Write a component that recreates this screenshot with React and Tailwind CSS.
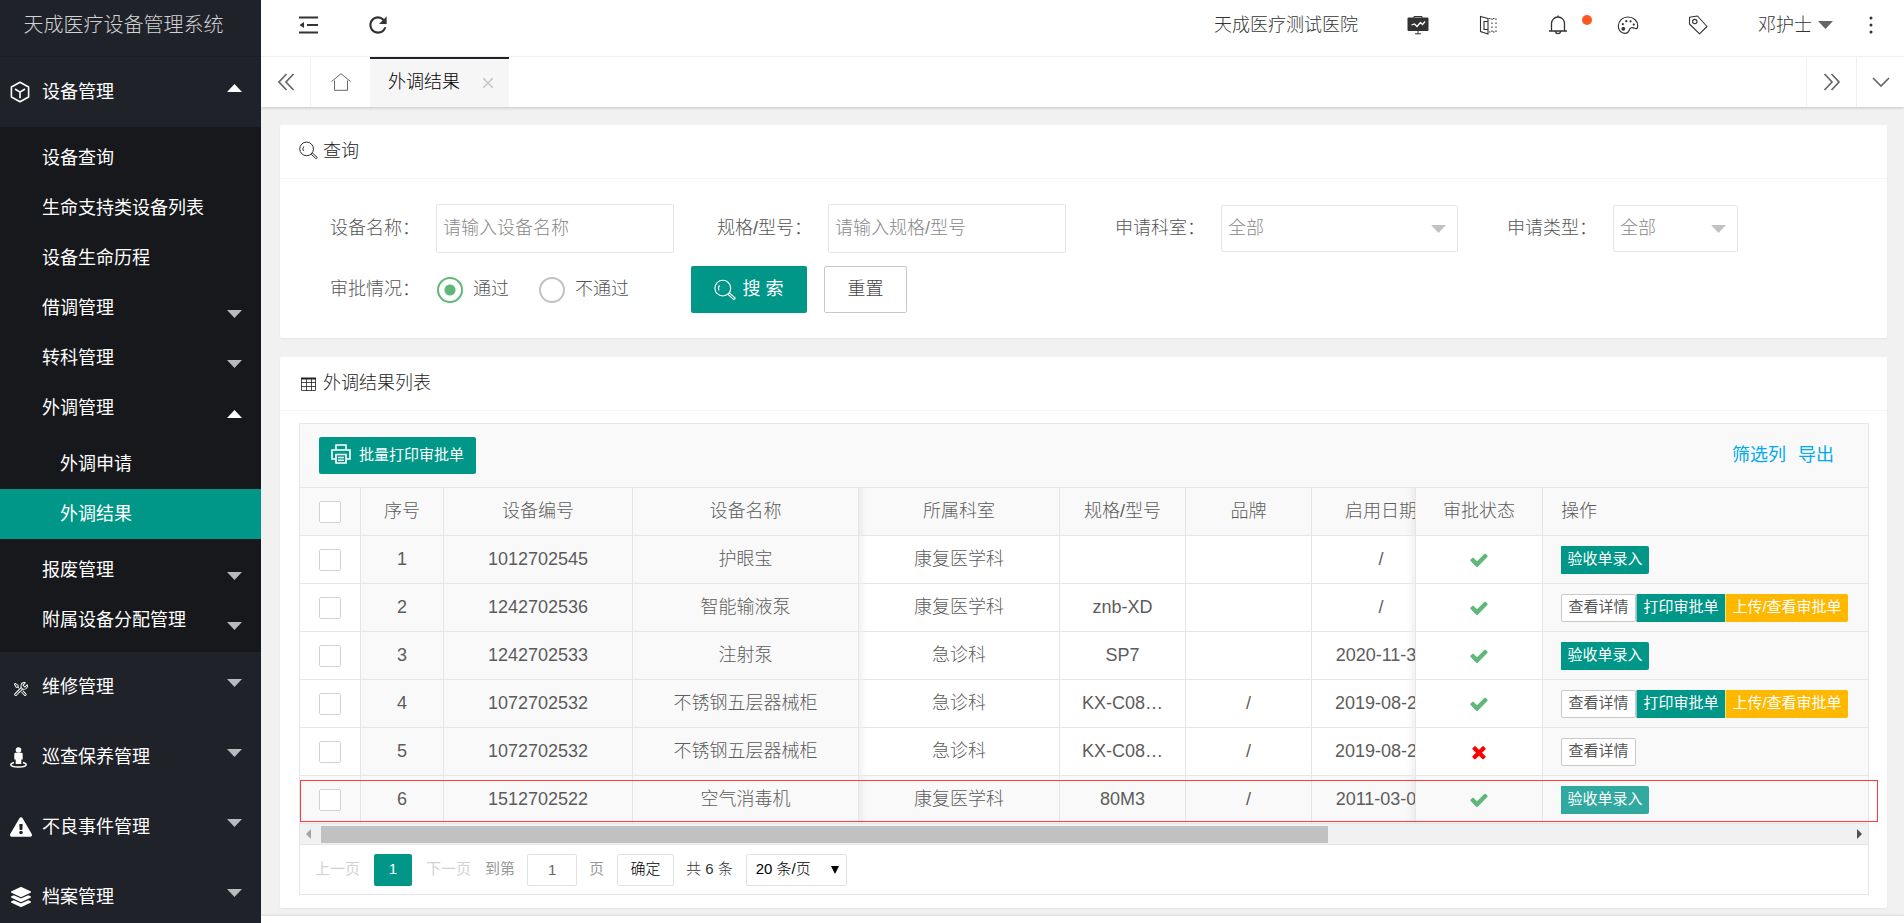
import { clsx } from "clsx";
import { FaExclamationTriangle, FaLayerGroup } from "react-icons/fa";
import { MdRefresh } from "react-icons/md";
import { VscTools } from "react-icons/vsc";

const deviceMenu = [
  { label: "设备查询" },
  { label: "生命支持类设备列表" },
  { label: "设备生命历程" },
  { label: "借调管理", caret: "down" },
  { label: "转科管理", caret: "down" },
  {
    label: "外调管理",
    caret: "up",
    children: [{ label: "外调申请" }, { label: "外调结果", active: true }],
  },
  { label: "报废管理", caret: "down" },
  { label: "附属设备分配管理", caret: "down" },
];

const rows = [
  { id: 1, code: "1012702545", name: "护眼宝", dept: "康复医学科", model: "", brand: "", date: "/", ok: true, actions: ["entry"] },
  { id: 2, code: "1242702536", name: "智能输液泵", dept: "康复医学科", model: "znb-XD", brand: "", date: "/", ok: true, actions: ["detail", "print", "upload"] },
  { id: 3, code: "1242702533", name: "注射泵", dept: "急诊科", model: "SP7", brand: "", date: "2020-11-30", ok: true, actions: ["entry"] },
  { id: 4, code: "1072702532", name: "不锈钢五层器械柜", dept: "急诊科", model: "KX-C08…", brand: "/", date: "2019-08-20", ok: true, actions: ["detail", "print", "upload"] },
  { id: 5, code: "1072702532", name: "不锈钢五层器械柜", dept: "急诊科", model: "KX-C08…", brand: "/", date: "2019-08-20", ok: false, actions: ["detail"] },
  { id: 6, code: "1512702522", name: "空气消毒机", dept: "康复医学科", model: "80M3", brand: "/", date: "2011-03-01", ok: true, actions: ["entry"], hover: true },
];

function Caret({ up, className }) {
  return (
    <svg viewBox="0 0 15 8" className={clsx("h-2 w-[15px] shrink-0", className)} fill="currentColor">
      <path d={up ? "M0 8 7.5 0 15 8z" : "M0 0h15L7.5 8z"} />
    </svg>
  );
}

function SearchIcon({ className }) {
  return (
    <svg viewBox="0 0 20 20" className={className} fill="none" stroke="currentColor" strokeWidth="1">
      <circle cx="8" cy="8.3" r="7.2" />
      <path d="M4.6 10.4a4.3 4.3 0 0 1 .4-4.6" />
      <path d="m12.8 14 1.3-1.3 5 4.4c.4.6-.6 1.7-1.4 1.4z" />
    </svg>
  );
}

function CubeIcon() {
  return (
    <svg viewBox="0 0 20 22" className="h-[22px] w-5" fill="none" stroke="currentColor" strokeWidth="1.6" strokeLinejoin="round">
      <path d="M10 1.2 18.6 6v10L10 20.8 1.4 16V6z" />
      <path d="m5 8 5 3.2L15 8M10 11.2v6" />
    </svg>
  );
}

function PersonIcon() {
  return (
    <svg viewBox="0 0 17 21" className="h-[21px] w-[17px]" fill="currentColor">
      <circle cx="8.5" cy="3" r="2.8" />
      <path d="M5.500 5.800h6q1.200 0 1.200 1.200v5.500h-1.400V17H5.700v-4.500H4.300V7q0-1.200 1.200-1.200z" />
      <path
        d="M4 15.500c-2 .5-3.200 1.200-3.200 2C.8 19 4 20 8.500 20s7.700-1 7.700-2.500c0-.8-1.200-1.500-3.200-2"
        fill="none"
        stroke="currentColor"
        strokeWidth="1.500"
      />
    </svg>
  );
}

function StatusIcon({ ok }) {
  return (
    <svg
      viewBox="0 0 1792 1792"
      role="img"
      aria-label={ok ? "通过" : "不通过"}
      className={clsx("mx-auto h-5 w-5", ok ? "text-[#5fb878]" : "text-[#f00]")}
      fill="currentColor"
    >
      <path
        d={
          ok
            ? "M1671 566q0 40-28 68l-724 724-136 136q-28 28-68 28t-68-28l-136-136-362-362q-28-28-28-68t28-68l136-136q28-28 68-28t68 28l294 295 656-657q28-28 68-28t68 28l136 136q28 28 28 68z"
            : "M1490 1322q0 40-28 68l-136 136q-28 28-68 28t-68-28l-294-294-294 294q-28 28-68 28t-68-28l-136-136q-28-28-28-68t28-68l294-294-294-294q-28-28-28-68t28-68l136-136q28-28 68-28t68 28l294 294 294-294q28-28 68-28t68 28l136 136q28 28 28 68t-28 68l-294 294 294 294q28 28 28 68z"
        }
      />
    </svg>
  );
}

function IconItem({ label, children, className }) {
  return (
    <button type="button" aria-label={label} className={clsx("flex h-14 w-[70px] items-center justify-center text-[#333]", className)}>
      {children}
    </button>
  );
}

function MenuGroup({ icon, label, up }) {
  return (
    <button type="button" className="flex h-[70px] w-full items-center pr-[19px] pl-[10px] text-left text-[18px] text-white">
      <span className="flex w-8 shrink-0 items-center">{icon}</span>
      <span className="flex-1">{label}</span>
      <Caret up={up} className={clsx("-mt-2", up ? "text-white" : "text-[#bababc]")} />
    </button>
  );
}

function Sidebar() {
  return (
    <aside className="w-[261px] shrink-0 overflow-hidden bg-[#20222a]">
      <div className="flex h-[57px] items-center justify-center border-b border-[#1b1d24] pr-[14px] pb-[6px] text-[20px] text-[#d2d3d4]">
        天成医疗设备管理系统
      </div>
      <nav className="font-normal">
        <MenuGroup icon={<CubeIcon />} label="设备管理" up />
        <ul className="bg-[#17181c] pt-[6px] pb-[7px] text-[18px] text-white">
          {deviceMenu.map((item) => (
            <li key={item.label}>
              <a href="#" className="flex h-[50px] items-center justify-between pr-[19px] pl-[42px]">
                <span>{item.label}</span>
                {item.caret && (
                  <Caret
                    up={item.caret === "up"}
                    className={clsx("mt-3", item.caret === "up" ? "text-white" : "text-[#b9b9ba]")}
                  />
                )}
              </a>
              {item.children && (
                <ul className="py-[6px]">
                  {item.children.map((child) => (
                    <li key={child.label}>
                      <a
                        href="#"
                        className={clsx("flex h-[50px] items-center pl-[60px]", child.active && "bg-[#009688]")}
                      >
                        {child.label}
                      </a>
                    </li>
                  ))}
                </ul>
              )}
            </li>
          ))}
        </ul>
        <MenuGroup icon={<VscTools className="mt-1 ml-[3px] h-4 w-4" />} label="维修管理" />
        <MenuGroup icon={<PersonIcon />} label="巡查保养管理" />
        <MenuGroup icon={<FaExclamationTriangle className="h-5 w-[22px]" />} label="不良事件管理" />
        <MenuGroup icon={<FaLayerGroup className="h-5 w-[22px]" />} label="档案管理" />
      </nav>
    </aside>
  );
}

function Header() {
  return (
    <header className="flex h-[57px] shrink-0 items-start border-b border-[#f6f6f6] bg-white pr-2 pl-3 text-[18px] text-[#333]">
      <div className="-mt-[3px] flex w-full items-center">
        <IconItem label="收起菜单">
          <svg viewBox="0 0 19 18" className="h-[18px] w-[19px]" fill="none" stroke="currentColor" strokeWidth="2.2">
            <path d="M0 1.5h19M8 9h11M0 16.5h19" />
            <path d="m.5 9 4.5-3v6z" fill="currentColor" stroke="none" />
          </svg>
        </IconItem>
        <IconItem label="刷新">
          <MdRefresh className="h-[26px] w-[26px]" />
        </IconItem>
        <span className="mr-[25px] ml-auto">天成医疗测试医院</span>
        <IconItem label="看板">
          <svg viewBox="0 0 22 20" className="h-5 w-[22px]" fill="none" stroke="currentColor">
            <path d="M7 3V1.5h8V3M11 15v4M8 18.8h6" />
            <path d="M1 3h20v12.5H1z" fill="currentColor" />
            <path d="m4.500 10 3-1 2.500 2.500L13.500 7.500l2 2L18 6.500" stroke="#fff" strokeWidth="1.3" />
          </svg>
        </IconItem>
        <IconItem label="通道">
          <svg viewBox="0 0 18 20" className="h-5 w-[18px]" fill="none" stroke="currentColor" strokeWidth="1.1">
            <path d="M9 3.500 1.500 1.500v15L9 19zM9 6.500H5v8h4" />
            <path d="M10 3.500h7.500M10 17h7.500M13 3.500V17M17 3.500V17" strokeDasharray="1.500 2.500" />
          </svg>
        </IconItem>
        <IconItem label="消息" className="relative">
          <svg viewBox="0 0 18 20" className="h-5 w-[18px]" fill="none" stroke="currentColor" strokeWidth="1.3">
            <path d="M0 16h18M2.500 16V8.500a6.500 6.500 0 0 1 13 0V16M9 .5V2M6.300 16.500a2.800 2.800 0 0 0 5.400 0" />
          </svg>
          <span className="absolute top-[18px] right-px h-[10px] w-[10px] rounded-full bg-[#ff5722]" />
        </IconItem>
        <IconItem label="主题">
          <svg viewBox="0 0 22 20" className="h-5 w-[22px]" fill="none" stroke="currentColor" strokeWidth="1.2">
            <path d="M11 2c5.500 0 9.700 4 9.700 8.500 0 3.200-1.200 3.600-3 2.800-2.500-1.100-4.700-.8-5.200 1.200-.5 1.800-1.500 3.800-4.700 3.800C4 18.300 1.300 15 1.300 11.300 1.300 6 5.500 2 11 2z" />
            <circle cx="6.300" cy="13.800" r="1.300" fill="currentColor" />
            <g fill="currentColor" stroke="none">
              <circle cx="5.800" cy="9.200" r="1.100" />
              <circle cx="9.300" cy="6.200" r="1.100" />
              <circle cx="13.600" cy="6.300" r="1.100" />
              <circle cx="16.800" cy="9.600" r="1.100" />
            </g>
          </svg>
        </IconItem>
        <IconItem label="便签">
          <svg viewBox="0 0 20 20" className="h-5 w-5" fill="none" stroke="currentColor" strokeWidth="1.1" strokeLinejoin="round">
            <path d="M1.500 2.200 9.500 1l9.500 10.500-7.500 7.300L1.500 9z" />
            <circle cx="6.800" cy="6.600" r="2.200" />
          </svg>
        </IconItem>
        <button type="button" className="flex h-14 items-center gap-[6px] pr-[13px] pl-[25px]">
          邓护士
          <Caret className="text-[#666]" />
        </button>
        <IconItem label="更多" className="!w-[50px]">
          <svg viewBox="0 0 4 18" className="h-[18px] w-1" fill="currentColor">
            <circle cx="2" cy="2" r="1.500" />
            <circle cx="2" cy="9" r="1.500" />
            <circle cx="2" cy="16" r="1.500" />
          </svg>
        </IconItem>
      </div>
    </header>
  );
}

function TabBar() {
  return (
    <div className="relative flex h-[50px] shrink-0 bg-white text-[18px] text-[#666] shadow-[0_1px_3px_rgba(0,0,0,0.18)]">
      <button type="button" aria-label="向左" className="flex w-[50px] items-center justify-center border-r border-[#f0f0f0]">
        <svg viewBox="0 0 18 18" className="h-[18px] w-[18px]" fill="none" stroke="currentColor" strokeWidth="1.700">
          <path d="M9.500 1 2 9l7.500 8M16.500 1 9 9l7.500 8" />
        </svg>
      </button>
      <button type="button" aria-label="首页" className="flex w-[59px] items-center justify-center">
        <svg viewBox="0 0 20 18" className="h-[18px] w-5" fill="none" stroke="currentColor" strokeWidth="1">
          <path d="M.5 8.500 10 .7l9.500 7.800M3.500 7.500v9.800h13V7.500" />
        </svg>
      </button>
      <div className="flex w-[139px] items-center justify-between border-t-2 border-[#20222a] bg-[#f6f6f6] pr-4 pl-[18px] text-black">
        <span className="-mt-[2px]">外调结果</span>
        <button type="button" aria-label="关闭" className="text-[#c2c2c2]">
          <svg viewBox="0 0 10 10" className="h-[10px] w-[10px]" fill="none" stroke="currentColor" strokeWidth="1.300">
            <path d="m0 0 10 10M10 0 0 10" />
          </svg>
        </button>
      </div>
      <button type="button" aria-label="向右" className="ml-auto flex w-[50px] items-center justify-center border-l border-[#f0f0f0]">
        <svg viewBox="0 0 18 18" className="h-[18px] w-[18px]" fill="none" stroke="currentColor" strokeWidth="1.700">
          <path d="m1.500 1 7.500 8-7.500 8M8.500 1l7.500 8-7.500 8" />
        </svg>
      </button>
      <button type="button" aria-label="标签操作" className="flex w-12 items-center justify-center border-l border-[#f0f0f0]">
        <svg viewBox="0 0 18 10" className="h-[10px] w-[18px]" fill="none" stroke="currentColor" strokeWidth="1.700">
          <path d="m1 1 8 8 8-8" />
        </svg>
      </button>
    </div>
  );
}

function FieldLabel({ htmlFor, children }) {
  return (
    <label htmlFor={htmlFor} className="w-[154px] shrink-0 pr-4 text-right whitespace-nowrap">
      {children}
    </label>
  );
}

function TextField({ id, label, placeholder }) {
  return (
    <div className="flex items-center">
      <FieldLabel htmlFor={id}>{label}</FieldLabel>
      <input
        id={id}
        type="text"
        placeholder={placeholder}
        className="h-[49px] w-[238px] rounded-[2px] border border-[#e6e6e6] bg-white px-[6px] placeholder:text-[#888]"
      />
    </div>
  );
}

function SelectField({ id, label, className }) {
  return (
    <div className="flex items-center pl-px">
      <FieldLabel htmlFor={id}>{label}</FieldLabel>
      <div className={clsx("relative", className)}>
        <select id={id} className="h-[47px] w-full appearance-none rounded-[2px] border border-[#e6e6e6] bg-white px-[6px] text-[#888]">
          <option>全部</option>
        </select>
        <Caret className="pointer-events-none absolute top-5 right-3 text-[#c2c2c2]" />
      </div>
    </div>
  );
}

function RadioField({ label, defaultChecked }) {
  return (
    <label className="flex items-center gap-[10px]">
      <input
        type="radio"
        name="approval"
        defaultChecked={defaultChecked}
        className="h-[26px] w-[26px] appearance-none rounded-full border-2 border-[#c2c2c2] checked:border-[#5fb878] checked:bg-[radial-gradient(circle,#5fb878_5px,transparent_6px)]"
      />
      {label}
    </label>
  );
}

function QueryCard() {
  return (
    <section className="rounded-[2px] bg-white shadow-[0_1px_2px_rgba(0,0,0,0.05)]">
      <h2 className="flex h-[54px] items-center gap-[5px] border-b border-[#f6f6f6] pl-[19px] text-[18px] font-light text-[#222]">
        <SearchIcon className="-mt-[2px] h-[19px] w-[19px]" />
        查询
      </h2>
      <form className="flex flex-col gap-[13px] pt-[25px] pb-[25px] pl-[2px] text-[18px] text-[#555]">
        <div className="flex items-center">
          <TextField id="name" label="设备名称：" placeholder="请输入设备名称" />
          <TextField id="model" label="规格/型号：" placeholder="请输入规格/型号" />
          <SelectField id="dept" label="申请科室：" className="w-[237px]" />
          <SelectField id="type" label="申请类型：" className="w-[125px]" />
        </div>
        <div className="flex items-center">
          <span className="w-[154px] shrink-0 pr-4 text-right">审批情况：</span>
          <div className="flex w-[255px] items-center gap-[30px] pl-px">
            <RadioField label="通过" defaultChecked />
            <RadioField label="不通过" />
          </div>
          <button type="button" className="flex h-[47px] w-[116px] items-center justify-center gap-[6px] rounded-[2px] bg-[#009688] font-normal text-white">
            <SearchIcon className="h-[22px] w-[22px]" />
            搜 索
          </button>
          <button type="reset" className="ml-[17px] h-[47px] w-[83px] rounded-[2px] border border-[#c9c9c9] text-[#444]">
            重置
          </button>
        </div>
      </form>
    </section>
  );
}

function ActionButton({ kind, faded }) {
  if (kind === "entry") {
    return (
      <button type="button" className={clsx("h-7 w-[88px] rounded-r-[2px] bg-[#009688] text-white", faded && "opacity-80")}>
        验收单录入
      </button>
    );
  }
  if (kind === "detail") {
    return (
      <button type="button" className="h-7 w-[75px] rounded-[2px] border border-[#c9c9c9] bg-white text-[#555]">
        查看详情
      </button>
    );
  }
  if (kind === "print") {
    return (
      <button type="button" className="h-7 w-[89px] border-l border-white/50 bg-[#009688] text-white">
        打印审批单
      </button>
    );
  }
  return (
    <button type="button" className="h-7 w-[123px] rounded-r-[2px] border-l border-white/50 bg-[#ffb800] text-white">
      上传/查看审批单
    </button>
  );
}

const cell = "h-12 border-r border-b border-[#e6e6e6] p-0 text-center font-light";
const leftShadow = "shadow-[inset_12px_0_8px_-10px_rgba(0,0,0,0.08)]";
const rightShadow = "shadow-[inset_-12px_0_8px_-10px_rgba(0,0,0,0.08)]";

function Check({ label }) {
  return (
    <input
      type="checkbox"
      aria-label={label}
      className="mx-auto block h-[22px] w-[22px] appearance-none rounded-[2px] border border-[#d2d2d2] bg-white"
    />
  );
}

function ResultTable() {
  return (
    <div className="relative">
      <table className="w-full table-fixed border-separate border-spacing-0 text-[18px] whitespace-nowrap text-[#5c5c5c]">
        <colgroup>
          <col className="w-[61px]" />
          <col className="w-[83px]" />
          <col className="w-[189px]" />
          <col className="w-[226px]" />
          <col className="w-[201px]" />
          <col className="w-[126px]" />
          <col className="w-[126px]" />
          <col className="w-[104px]" />
          <col className="w-[127px]" />
          <col />
        </colgroup>
        <thead>
          <tr className="bg-[#f9f9f9]">
            <th className={cell}>
              <Check label="全选" />
            </th>
            <th className={cell}>序号</th>
            <th className={cell}>设备编号</th>
            <th className={cell}>设备名称</th>
            <th className={clsx(cell, leftShadow)}>所属科室</th>
            <th className={cell}>规格/型号</th>
            <th className={cell}>品牌</th>
            <th className={clsx(cell, rightShadow, "overflow-hidden")}>
              <div className="w-[138px]">启用日期</div>
            </th>
            <th className={cell}>审批状态</th>
            <th className={clsx(cell, "border-r-0 pl-[18px] text-left")}>操作</th>
          </tr>
        </thead>
        <tbody>
          {rows.map((row) => (
            <tr key={row.id} className={row.hover ? "bg-[#f9f9f9]" : "bg-white"}>
              <td className={cell}>
                <Check label={`选择第${row.id}行`} />
              </td>
              <td className={clsx(cell, "bg-[#f9f9f9]")}>{row.id}</td>
              <td className={clsx(cell, "bg-[#f9f9f9]")}>{row.code}</td>
              <td className={clsx(cell, "bg-[#f9f9f9]")}>{row.name}</td>
              <td className={clsx(cell, leftShadow)}>{row.dept}</td>
              <td className={cell}>{row.model}</td>
              <td className={cell}>{row.brand}</td>
              <td className={clsx(cell, rightShadow, "overflow-hidden")}>
                <div className="w-[138px]">{row.date}</div>
              </td>
              <td className={cell}>
                <StatusIcon ok={row.ok} />
              </td>
              <td className={clsx(cell, "border-r-0 bg-[#f9f9f9] pl-[18px]")}>
                <div className="flex text-[15px] font-normal">
                  {row.actions.map((kind) => (
                    <ActionButton key={kind} kind={kind} faded={row.hover} />
                  ))}
                </div>
              </td>
            </tr>
          ))}
        </tbody>
      </table>
      <div className="pointer-events-none absolute -right-[10px] bottom-[2px] left-0 h-[42px] border border-[#ff3b3b]" />
    </div>
  );
}

function ScrollTrack() {
  return (
    <div className="flex h-[21px] items-center border-b border-[#e6e6e6] bg-[#f1f1f1] px-[6px]">
      <svg viewBox="0 0 5 10" className="h-[10px] w-[5px] text-[#a3a3a3]" fill="currentColor">
        <path d="M5 0v10L0 5z" />
      </svg>
      <div className="mx-[10px] h-[17px] flex-1">
        <div className="h-full w-[66%] bg-[#c1c1c1]" />
      </div>
      <svg viewBox="0 0 5 10" className="h-[10px] w-[5px] text-[#505050]" fill="currentColor">
        <path d="M0 0v10l5-5z" />
      </svg>
    </div>
  );
}

function Pagination() {
  return (
    <div className="flex h-[49px] items-center pl-[15px] text-[15px] text-[#333]">
      <button type="button" className="font-normal text-[#d2d2d2]">上一页</button>
      <button type="button" className="ml-[14px] h-8 w-[38px] rounded-[2px] bg-[#009688] text-white">1</button>
      <button type="button" className="ml-[14px] font-normal text-[#d2d2d2]">下一页</button>
      <label htmlFor="page" className="ml-[14px] font-normal text-[#999]">到第</label>
      <input
        id="page"
        type="text"
        defaultValue="1"
        className="ml-3 h-8 w-[50px] rounded-[2px] border border-[#e2e2e2] text-center text-[#666]"
      />
      <span className="ml-3 font-normal text-[#999]">页</span>
      <button type="button" className="ml-[13px] h-8 w-[57px] rounded-[2px] border border-[#e2e2e2] text-black">确定</button>
      <span className="ml-3">共 6 条</span>
      <div className="relative ml-[13px]">
        <select aria-label="每页条数" className="h-8 w-[101px] appearance-none rounded-[2px] border border-[#e2e2e2] bg-white px-[9px] text-black">
          <option>20 条/页</option>
        </select>
        <svg viewBox="0 0 8 8" className="pointer-events-none absolute top-3 right-2 h-2 w-2" fill="#000">
          <path d="M0 0h8L4 8z" />
        </svg>
      </div>
    </div>
  );
}

function ResultCard() {
  return (
    <section className="rounded-[2px] bg-white pb-[13px] shadow-[0_1px_2px_rgba(0,0,0,0.05)]">
      <h2 className="flex h-[54px] items-center gap-[7px] border-b border-[#f6f6f6] pl-[21px] text-[18px] font-light text-[#222]">
        <svg viewBox="0 0 15 14" className="h-[14px] w-[15px]" fill="none" stroke="currentColor">
          <path d="M0 1.500h15" strokeWidth="2" />
          <path d="M.5 1v12.500h14V1M0 5.500h15M0 9.500h15M5.500 2v12M10.500 2v12" strokeWidth=".8" />
        </svg>
        外调结果列表
      </h2>
      <div className="mt-3 mr-[18px] ml-[19px] border border-[#e6e6e6]">
        <div className="flex h-16 items-center justify-between border-b border-[#e6e6e6] bg-[#f9f9f9] pr-[34px] pl-[19px] font-normal">
          <button type="button" className="flex h-[37px] items-center gap-2 rounded-[2px] bg-[#009688] px-3 text-[15px] text-white">
            <svg viewBox="0 0 20 20" className="-mt-1 h-5 w-5" fill="none" stroke="currentColor" strokeWidth="1.600">
              <path d="M5 6V1h10v5M5 15H1V6h18v9h-4M5 10.500h10V19H5zM7 13.500h6M7 16.200h6" />
            </svg>
            批量打印审批单
          </button>
          <div className="flex gap-3 text-[18px] text-[#01aaed]">
            <a href="#">筛选列</a>
            <a href="#">导出</a>
          </div>
        </div>
        <ResultTable />
        <ScrollTrack />
        <Pagination />
      </div>
    </section>
  );
}

export default function App() {
  return (
    <div className="flex h-screen overflow-hidden bg-[#f1f1f1] font-['Liberation_Sans','Noto_Sans_CJK_SC',sans-serif] font-light">
      <Sidebar />
      <div className="flex min-w-0 flex-1 flex-col">
        <Header />
        <TabBar />
        <main className="flex shrink-0 flex-col gap-[19px] pt-[18px] pr-[17px] pb-2 pl-[19px]">
          <QueryCard />
          <ResultCard />
        </main>
        <footer className="h-[55px] shrink-0 bg-white shadow-[0_-1px_2px_rgba(0,0,0,0.1)]" />
      </div>
    </div>
  );
}
